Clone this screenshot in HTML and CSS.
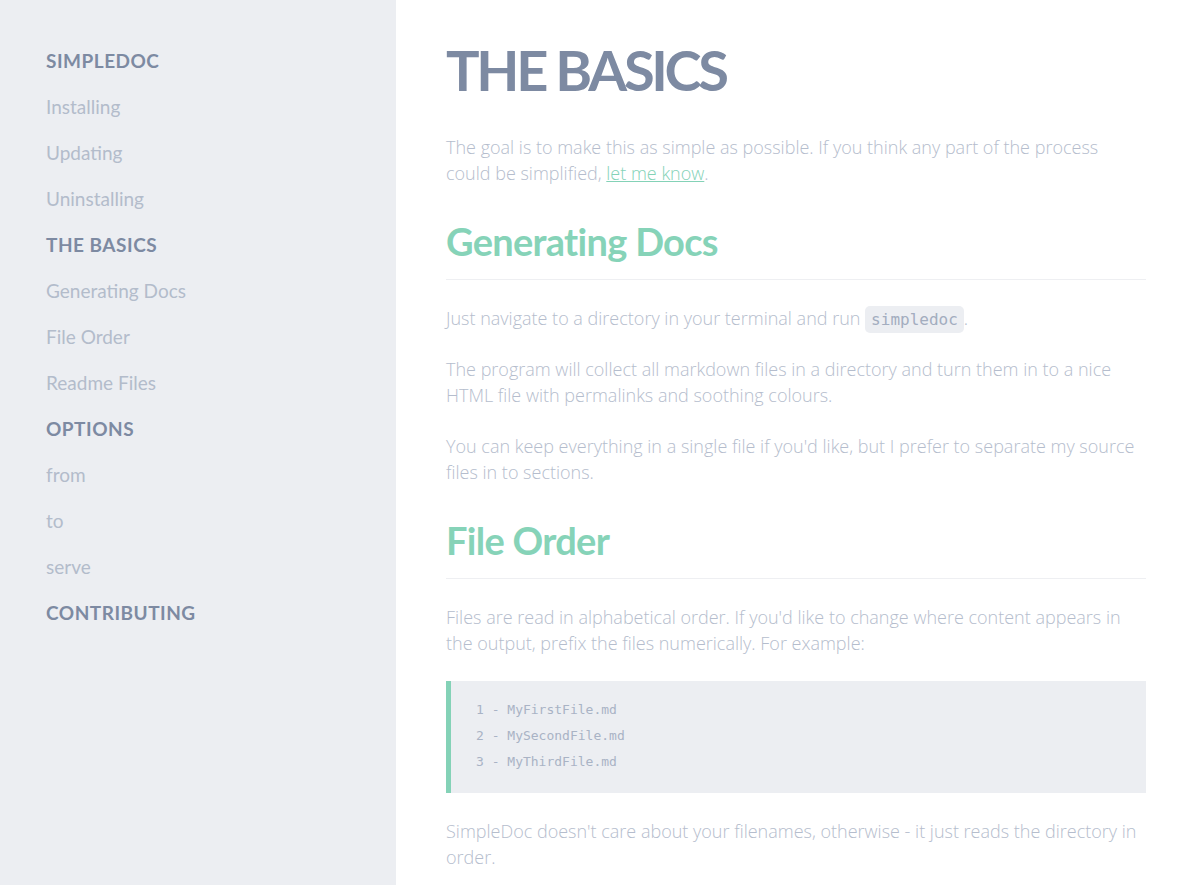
FILE: index.html
```html
<!DOCTYPE html>
<html lang="en">
<head>
<meta charset="utf-8">
<title>SimpleDoc</title>
<link rel="stylesheet" href="styles.css">
</head>
<body>
<nav class="sidebar">
  <ul class="nav-list">
    <li class="nav-head">SIMPLEDOC</li>
    <li class="nav-item">Installing</li>
    <li class="nav-item">Updating</li>
    <li class="nav-item">Uninstalling</li>
    <li class="nav-head">THE BASICS</li>
    <li class="nav-item">Generating Docs</li>
    <li class="nav-item">File Order</li>
    <li class="nav-item">Readme Files</li>
    <li class="nav-head">OPTIONS</li>
    <li class="nav-item">from</li>
    <li class="nav-item">to</li>
    <li class="nav-item">serve</li>
    <li class="nav-head">CONTRIBUTING</li>
  </ul>
</nav>
<main class="content">
  <h1 class="title">THE BASICS</h1>
  <p class="text">The goal is to make this as simple as possible. If you think any part of the process could be simplified, <a class="link" href="#">let me know</a>.</p>
  <h2 class="section">Generating Docs</h2>
  <p class="text">Just navigate to a directory in your terminal and run <code class="inline-code">simpledoc</code>.</p>
  <p class="text">The program will collect all markdown files in a directory and turn them in to a nice HTML file with permalinks and soothing colours.</p>
  <p class="text">You can keep everything in a single file if you'd like, but I prefer to separate my source files in to sections.</p>
  <h2 class="section">File Order</h2>
  <p class="text">Files are read in alphabetical order. If you'd like to change where content appears in the output, prefix the files numerically. For example:</p>
  <pre class="code-block">1 - MyFirstFile.md
2 - MySecondFile.md
3 - MyThirdFile.md</pre>
  <p class="text">SimpleDoc doesn't care about your filenames, otherwise - it just reads the directory in order.</p>
</main>
</body>
</html>
```
FILE: styles.css
```css
html, body {
  margin: 0;
  padding: 0;
  background: #ffffff;
}
body {
  display: flex;
  align-items: stretch;
  min-height: 100vh;
  height: 885px;
  overflow: hidden;
  font-family: "Open Sans", "Liberation Sans", sans-serif;
}
.sidebar {
  flex: 0 0 396px;
  background: #eceef2;
  box-sizing: border-box;
  padding: 38px 46px;
}
.nav-list {
  list-style: none;
  margin: 0;
  padding: 0;
}
.nav-list li {
  font-family: "Lato", "Open Sans", sans-serif;
  font-size: 19px;
  line-height: 46px;
  height: 46px;
}
.nav-head {
  font-weight: 700;
  color: #7d8aa2;
  letter-spacing: 0.5px;
}
.nav-item {
  font-weight: 400;
  color: #b3bccb;
  letter-spacing: 0;
}
.content {
  flex: 0 0 700px;
  padding: 35px 50px 0 50px;
}
.title {
  font-family: "Lato", "Open Sans", sans-serif;
  font-weight: 700;
  font-size: 56px;
  line-height: 70px;
  letter-spacing: -3.3px;
  color: #7d8aa2;
  margin: 0 0 29px;
}
.text {
  font-weight: 300;
  font-size: 18px;
  line-height: 26px;
  color: #b5bdcd;
  margin: 0 0 25px;
}
.link {
  color: #84d2b7;
  text-decoration: underline;
}
.section {
  font-family: "Lato", "Open Sans", sans-serif;
  font-weight: 700;
  font-size: 38px;
  line-height: 46px;
  letter-spacing: -0.7px;
  color: #86d3b8;
  margin: 32px 0 25px;
  padding-bottom: 15px;
  border-bottom: 1px solid #eeeff2;
}
.inline-code {
  font-family: "DejaVu Sans Mono", monospace;
  font-size: 16px;
  line-height: 1;
  color: #a3adbf;
  background: #eceef2;
  border-radius: 5px;
  padding: 4px 6px;
}
.code-block {
  margin: 0 0 25px;
  background: #eceef2;
  border-left: 5px solid #84d2b7;
  padding: 16px 25px 18px;
  font-family: "DejaVu Sans Mono", monospace;
  font-size: 13px;
  line-height: 26px;
  color: #a9b3c5;
}
```
